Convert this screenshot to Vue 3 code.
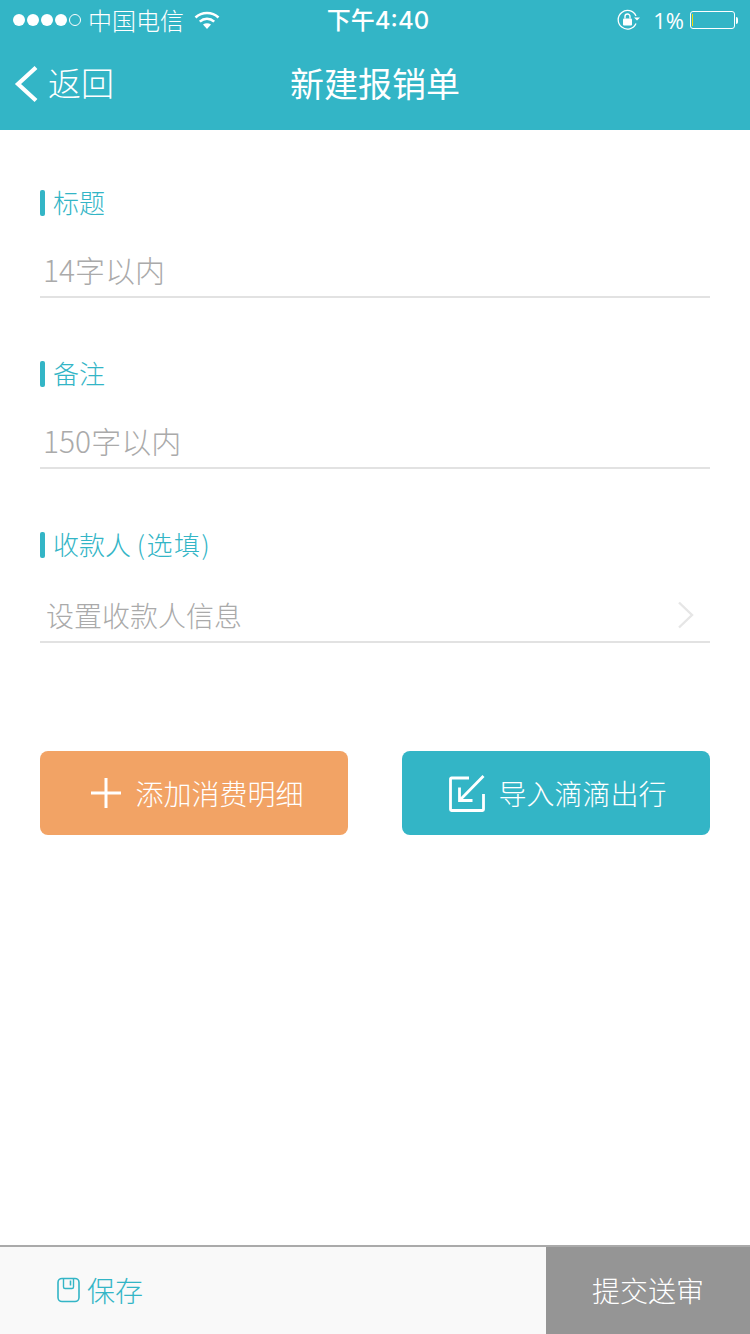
<template>
  <div class="page">
    <header class="head">
      <div class="status">
        <div class="status-left">
          <span class="dots">
            <i v-for="n in 4" :key="n" class="dot"></i>
            <i class="dot empty"></i>
          </span>
          <span class="carrier">中国电信</span>
          <svg class="wifi" width="26" height="20" viewBox="0 0 26 20">
            <path d="M1.5 7.500C8 1.500 18 1.500 24.500 7.500" fill="none" stroke="#fff" stroke-width="2.600" />
            <path d="M5.800 11.600C10 7.800 16 7.800 20.200 11.600" fill="none" stroke="#fff" stroke-width="2.600" />
            <path d="M9 14.600C11.400 12.800 14.600 12.800 17 14.600L13 19Z" fill="#fff" />
          </svg>
        </div>
        <div class="time">下午4:40</div>
        <div class="status-right">
          <svg class="lock" width="24" height="22" viewBox="0 0 24 22">
            <path d="M19 14.500A9.300 9.300 0 1 1 19 7" fill="none" stroke="#fff" stroke-width="1.300" />
            <path d="M17 8.500h6l-3 3z" fill="#fff" />
            <rect x="6" y="9.500" width="9" height="7" rx="1" fill="#fff" />
            <path d="M8 9.500V7.500a2.500 2.500 0 0 1 5 0v2" fill="none" stroke="#fff" stroke-width="1.400" />
          </svg>
          <span class="percent">1%</span>
          <span class="battery"><i class="level"></i></span>
          <i class="cap"></i>
        </div>
      </div>
      <div class="nav">
        <div class="back">
          <svg width="24" height="38" viewBox="0 0 24 38">
            <path d="M22 2.500L4 19l18 16.500" fill="none" stroke="#fff" stroke-width="4.200" />
          </svg>
          <span>返回</span>
        </div>
        <div class="title">新建报销单</div>
      </div>
    </header>

    <main class="form">
      <section class="field">
        <div class="label"><span>标题</span></div>
        <div class="input">14字以内</div>
      </section>
      <section class="field">
        <div class="label"><span>备注</span></div>
        <div class="input">150字以内</div>
      </section>
      <section class="field payee">
        <div class="label"><span>收款人 <span class="optional">(选填)</span></span></div>
        <div class="input picker">
          <span>设置收款人信息</span>
          <svg width="18" height="28" viewBox="0 0 18 28">
            <path d="M2 1.500L15 14 2 26.500" fill="none" stroke="#e6e6e6" stroke-width="2.400" />
          </svg>
        </div>
      </section>

      <div class="actions">
        <button class="action orange">
          <svg width="30" height="30" viewBox="0 0 30 30">
            <path d="M0 15h30M15 0v30" stroke="#fff" stroke-width="3" />
          </svg>
          <span>添加消费明细</span>
        </button>
        <button class="action teal">
          <svg width="36" height="37" viewBox="0 0 36 37">
            <path d="M20 3H2.500a1 1 0 0 0-1 1V34.500a1 1 0 0 0 1 1H33.500a1 1 0 0 0 1-1V19" fill="none" stroke="#fff" stroke-width="2.800" />
            <path d="M34.500 1L10.500 25.500M10.500 12.500V25.500H23.500" fill="none" stroke="#fff" stroke-width="2.800" />
          </svg>
          <span>导入滴滴出行</span>
        </button>
      </div>
    </main>

    <footer class="foot">
      <div class="save">
        <svg width="23" height="26" viewBox="0 0 23 26">
          <rect x="1" y="1.500" width="21" height="23" rx="4" fill="none" stroke="#33b5c6" stroke-width="1.600" />
          <path d="M6.500 2v8a1.500 1.500 0 0 0 1.500 1.500h7a1.500 1.500 0 0 0 1.500-1.500V2" fill="none" stroke="#33b5c6" stroke-width="1.400" />
          <path d="M13.500 3.500v5" stroke="#33b5c6" stroke-width="1.600" />
        </svg>
        <span>保存</span>
      </div>
      <div class="submit">提交送审</div>
    </footer>
  </div>
</template>

<script setup>
</script>

<style>
html, body {
  margin: 0;
  background: #fff;
}
</style>

<style scoped>
.page {
  width: 750px;
  height: 1334px;
  display: flex;
  flex-direction: column;
  font-family: "Noto Sans CJK SC", "Noto Sans", sans-serif;
  font-weight: 300;
  background: #fff;
}
.head {
  height: 130px;
  background: #33b5c6;
  color: #fff;
  flex-shrink: 0;
}
.status {
  height: 40px;
  display: grid;
  grid-template-columns: 1fr auto 1fr;
  align-items: center;
  padding: 0 12px 0 13px;
  font-size: 24px;
}
.status-left, .status-right {
  display: flex;
  align-items: center;
}
.status-right {
  justify-content: flex-end;
}
.dots {
  display: flex;
  gap: 2px;
}
.dot {
  width: 12px;
  height: 12px;
  border-radius: 50%;
  background: #fff;
  box-sizing: border-box;
}
.dot.empty {
  background: none;
  border: 1px solid #fff;
}
.carrier {
  margin-left: 7px;
  line-height: 28px;
}
.wifi {
  margin-left: 10px;
}
.time {
  font-family: Inter, "Noto Sans CJK SC", sans-serif;
  font-size: 24px;
  font-weight: 500;
  line-height: 28px;
  margin: 2px 0 0 5px;
}
.lock {
  margin-right: 1px;
}
.percent {
  font-family: "Open Sans", sans-serif;
  font-size: 22px;
  font-weight: 400;
  margin-left: 11px;
}
.battery {
  width: 45px;
  height: 18px;
  margin-left: 6px;
  border: 1px solid #fff;
  border-radius: 3px;
  padding: 2px 0 2px 1px;
  box-sizing: border-box;
  display: flex;
}
.level {
  width: 1px;
  background: #f5d90a;
}
.cap {
  width: 2px;
  height: 7px;
  margin-left: 1px;
  background: #fff;
  border-radius: 0 2px 2px 0;
}
.nav {
  height: 90px;
  position: relative;
  display: flex;
  align-items: center;
  justify-content: center;
}
.back {
  position: absolute;
  left: 14px;
  top: 22px;
  display: flex;
  align-items: flex-start;
  gap: 10px;
  font-size: 33px;
  line-height: 40px;
}
.back svg {
  margin-top: 3px;
}
.title {
  font-size: 34px;
  font-weight: 400;
  line-height: 44px;
  margin-top: -5px;
}
.form {
  flex: 1;
  padding: 57px 40px 0;
}
.field {
  margin-bottom: 60px;
}
.label {
  height: 30px;
  display: flex;
  align-items: center;
  gap: 8px;
  color: #33b5c6;
  font-size: 26px;
  line-height: 30px;
}
.label::before {
  content: "";
  width: 5px;
  height: 26px;
  margin-top: 2px;
  border-radius: 2px;
  background: #33b5c6;
}
.optional {
  letter-spacing: 1.500px;
}
.input {
  height: 67px;
  margin-top: 14px;
  padding: 18px 0 0 3px;
  border-bottom: 2px solid #e2e2e2;
  color: #aaa;
  font-size: 30px;
  line-height: 40px;
  box-sizing: border-box;
}
.payee {
  margin-bottom: 0;
}
.picker {
  height: 55px;
  margin-top: 29px;
  padding: 0 15px 0 6px;
  display: flex;
  align-items: center;
  justify-content: space-between;
  font-size: 28px;
}
.actions {
  display: flex;
  justify-content: space-between;
  margin-top: 108px;
}
.action {
  width: 308px;
  height: 84px;
  border: none;
  border-radius: 8px;
  color: #fff;
  font-family: inherit;
  font-weight: 300;
  font-size: 28px;
  display: flex;
  align-items: center;
  justify-content: center;
  gap: 14px;
  padding: 0 0 0 7px;
}
.orange {
  background: #f2a365;
}
.teal {
  background: #33b5c6;
  gap: 13px;
  padding-left: 4px;
}
.foot {
  height: 89px;
  flex-shrink: 0;
  border-top: 2px solid #aaa;
  background: #f9f9f9;
  display: flex;
  justify-content: space-between;
  box-sizing: border-box;
}
.save {
  display: flex;
  align-items: center;
  gap: 7px;
  padding: 0 0 2px 57px;
  color: #33b5c6;
  font-size: 28px;
}
.submit {
  width: 204px;
  background: #959595;
  color: #fff;
  font-size: 28px;
  display: flex;
  align-items: center;
  justify-content: center;
  padding-bottom: 2px;
}
</style>
